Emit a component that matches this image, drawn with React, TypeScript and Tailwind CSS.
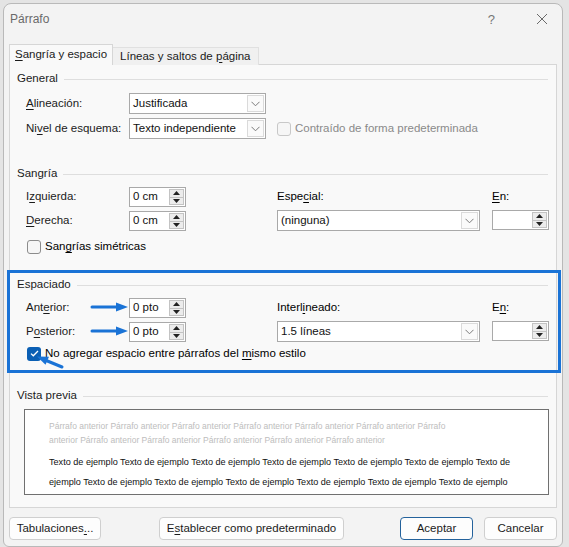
import type { ReactNode } from 'react';

function U({ c }: { c: string }) {
  return <span className="underline underline-offset-[2px] decoration-[1px]">{c}</span>;
}

function Chevron() {
  return (
    <svg width="9" height="6" viewBox="0 0 9 6" fill="none">
      <polyline points="0.5,0.8 4.5,4.8 8.5,0.8" stroke="#7a7a7a" strokeWidth="1" />
    </svg>
  );
}

function Heading({ children }: { children: ReactNode }) {
  return (
    <div className="flex items-center h-[26px] pl-[7px] pr-[8px]">
      <span className="text-[#1b1b1b]">{children}</span>
      <div className="flex-1 h-px bg-[#dedede] ml-[6px]" />
    </div>
  );
}

function Select({ value, w }: { value?: string; w: string }) {
  return (
    <div className={`flex h-[21px] ${w} border border-[#a9a9a9] bg-white`}>
      <div className="flex-1 flex items-center pl-[3px] text-[#111]">{value}</div>
      <div className="w-[17px] m-px flex items-center justify-center border border-[#dadada] bg-[#fafafa]">
        <Chevron />
      </div>
    </div>
  );
}

function Spin({ value }: { value?: string }) {
  return (
    <div className="flex h-[20px] w-[57px] border border-[#a9a9a9] bg-white">
      <div className="flex-1 flex items-center pl-[3px] text-[#111]">{value}</div>
      <div className="w-[15px] m-px flex flex-col border border-[#c3c3c3] bg-[#ececec]">
        <div className="flex-1 flex items-center justify-center border-b border-[#c3c3c3]">
          <svg width="7" height="4" viewBox="0 0 7 4"><polygon points="0,4 7,4 3.5,0" fill="#222" /></svg>
        </div>
        <div className="flex-1 flex items-center justify-center">
          <svg width="7" height="4" viewBox="0 0 7 4"><polygon points="0,0 7,0 3.5,4" fill="#222" /></svg>
        </div>
      </div>
    </div>
  );
}

function Box({ checked, disabled }: { checked?: boolean; disabled?: boolean }) {
  if (checked) {
    return (
      <div className="w-[14px] h-[14px] rounded-[3px] bg-[#0a5fb4] flex items-center justify-center">
        <svg width="9" height="7" viewBox="0 0 9 7" fill="none">
          <polyline points="1,3.6 3.3,5.8 8,1" stroke="white" strokeWidth="1.3" />
        </svg>
      </div>
    );
  }
  return (
    <div
      className={`w-[14px] h-[14px] rounded-[3px] border bg-[#f6f6f6] ${
        disabled ? 'border-[#c8c8c8]' : 'border-[#8c8c8c]'
      }`}
    />
  );
}

function Label({ children }: { children: ReactNode }) {
  return <div className="w-[103px] pl-[16px] box-content text-[#1b1b1b]">{children}</div>;
}

function Btn({ children, w, primary }: { children: ReactNode; w: string; primary?: boolean }) {
  return (
    <div
      className={`h-[23px] ${w} flex items-center justify-center rounded-[4px] bg-[#fdfdfd] text-[#1b1b1b] border ${
        primary ? 'border-[#24629c]' : 'border-[#cfcfcf]'
      }`}
    >
      {children}
    </div>
  );
}

const anterior = 'Párrafo anterior ';

export default function App() {
  return (
    <div className="relative w-[569px] h-[547px] overflow-hidden bg-[#e4e4e4] pl-[3px] pt-[3px] font-['Liberation_Sans',Arial,sans-serif] text-[11.5px] leading-none">
      <div className="w-[560px] h-[544px] rounded-t-[8px] rounded-b-[6px] border border-[#b9b9b9] bg-[#f3f3f3] flex flex-col">
        {/* title bar */}
        <div className="h-[30px] flex items-center pl-[6px] pr-[14px] text-[#6a6a6a]">
          <span className="text-[12px]">Párrafo</span>
          <span className="ml-auto mr-[41px] text-[13px] text-[#777]">?</span>
          <svg width="12" height="12" viewBox="0 0 12 12" fill="none">
            <path d="M1 1L11 11M11 1L1 11" stroke="#6a6a6a" strokeWidth="1" />
          </svg>
        </div>

        {/* tabs */}
        <div className="mt-[10px] ml-[5px] flex items-end h-[21px] relative z-10 -mb-px">
          <div className="h-[21px] px-[5px] flex items-center bg-[#f9f9f9] border border-b-0 border-[#d6d6d6] text-[#1b1b1b]">
            <span><U c="S" />angría y espacio</span>
          </div>
          <div className="h-[18px] px-[7px] flex items-center bg-[#f0f0f0] border-t border-r border-[#e0e0e0] text-[#1b1b1b]">
            <span>Líneas y saltos de <U c="p" />ágina</span>
          </div>
        </div>

        {/* panel */}
        <div className="mx-[5px] h-[444px] pt-px border border-[#d6d6d6] bg-[#f9f9f9] flex flex-col">
          <Heading>General</Heading>
          <div className="mt-px flex items-center h-[21px]">
            <Label><U c="A" />lineación:</Label>
            <Select value="Justificada" w="w-[137px]" />
          </div>
          <div className="mt-[4px] flex items-center h-[21px]">
            <Label>Ni<U c="v" />el de esquema:</Label>
            <Select value="Texto independiente" w="w-[137px]" />
            <div className="ml-[11px] flex items-center gap-[4px] text-[#8a8a8a]">
              <Box disabled />
              <span>Contraído de forma predeterminada</span>
            </div>
          </div>

          <div className="mt-[22px]">
            <Heading>Sangría</Heading>
          </div>
          <div className="flex">
            <div className="w-[267px] flex flex-col">
              <div className="flex items-center h-[20px]">
                <Label>I<U c="z" />quierda:</Label>
                <Spin value="0 cm" />
              </div>
              <div className="mt-[4px] flex items-center h-[20px]">
                <Label><U c="D" />erecha:</Label>
                <Spin value="0 cm" />
              </div>
            </div>
            <div className="flex flex-col">
              <div className="h-[20px] flex items-center"><span>Espe<U c="c" />ial:</span></div>
              <div className="mt-[3px]"><Select value="(ninguna)" w="w-[203px]" /></div>
            </div>
            <div className="ml-[12px] flex flex-col">
              <div className="h-[20px] flex items-center"><span><U c="E" />n:</span></div>
              <div className="mt-[3px]"><Spin /></div>
            </div>
          </div>
          <div className="mt-[6px] h-[20px] pl-[17px] flex items-center gap-[4px]">
            <Box />
            <span>San<U c="g" />rías simétricas</span>
          </div>

          <div className="mt-[15px]">
            <Heading>Espaciado</Heading>
          </div>
          <div className="flex">
            <div className="w-[267px] flex flex-col">
              <div className="flex items-center h-[20px]">
                <Label>Ant<U c="e" />rior:</Label>
                <Spin value="0 pto" />
              </div>
              <div className="mt-[4px] flex items-center h-[20px]">
                <Label>P<U c="o" />sterior:</Label>
                <Spin value="0 pto" />
              </div>
            </div>
            <div className="flex flex-col">
              <div className="h-[20px] flex items-center"><span>Interl<U c="i" />neado:</span></div>
              <div className="mt-[3px]"><Select value="1.5 líneas" w="w-[203px]" /></div>
            </div>
            <div className="ml-[12px] flex flex-col">
              <div className="h-[20px] flex items-center"><span>E<U c="n" />:</span></div>
              <div className="mt-[3px]"><Spin /></div>
            </div>
          </div>
          <div className="mt-[2px] h-[19px] pl-[17px] flex items-center gap-[4px]">
            <Box checked />
            <span>No agregar espacio entre párrafos del <U c="m" />ismo estilo</span>
          </div>

          <div className="mt-[20px]">
            <Heading>Vista previa</Heading>
          </div>
          <div className="ml-[14px] w-[525px] h-[86px] border border-[#707070] bg-white pl-[24px] pt-[9px]">
            <div className="h-[14px] flex items-center text-[8.5px] text-[#bdbdbd] whitespace-nowrap">
              {anterior.repeat(6)}Párrafo
            </div>
            <div className="h-[14px] flex items-center text-[8.5px] text-[#bdbdbd] whitespace-nowrap">
              {'anterior ' + anterior.repeat(4)}Párrafo anterior
            </div>
            <div className="mt-[7px] h-[18px] flex items-center text-[9.1px] text-[#111] whitespace-nowrap">
              {'Texto de ejemplo '.repeat(6)}Texto de
            </div>
            <div className="mt-[2px] h-[18px] flex items-center text-[9.1px] text-[#111] whitespace-nowrap">
              {'ejemplo ' + 'Texto de ejemplo '.repeat(5)}Texto de ejemplo
            </div>
          </div>
        </div>

        {/* buttons */}
        <div className="mt-[9px] px-[5px] flex pr-[5px]">
          <Btn w="w-[92px]"><span>Tabulaciones<U c="." />..</span></Btn>
          <div className="ml-[58px]">
            <Btn w="w-[185px]"><span>E<U c="s" />tablecer como predeterminado</span></Btn>
          </div>
          <div className="ml-auto">
            <Btn w="w-[73px]" primary>Aceptar</Btn>
          </div>
          <div className="ml-[11px]">
            <Btn w="w-[73px]">Cancelar</Btn>
          </div>
        </div>
      </div>

      {/* annotation overlay */}
      <div className="absolute left-[7px] top-[270px] w-[554px] h-[103px] border-[3px] border-[#1a73d6] pointer-events-none" />
      <svg className="absolute left-0 top-0 pointer-events-none" width="569" height="547" viewBox="0 0 569 547">
        <g fill="#1a73d6" stroke="#1a73d6" strokeLinecap="round">
          <path d="M92 307 L118 307" strokeWidth="3" />
          <polygon points="116,302.5 128,307 116,311.5" stroke="none" />
          <path d="M92 331 L118 331" strokeWidth="3" />
          <polygon points="116,326.5 128,331 116,335.5" stroke="none" />
          <path d="M62 367 L45 360" strokeWidth="3" />
          <polygon points="37,356.5 49,356.8 45.5,364.8" stroke="none" />
        </g>
      </svg>
    </div>
  );
}
